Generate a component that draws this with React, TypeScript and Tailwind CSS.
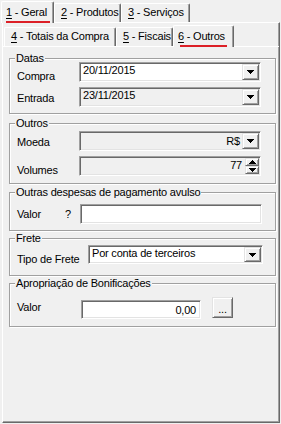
import React from "react";

const sunk =
  "border border-[#a0a0a0] border-r-white border-b-white shadow-[inset_1px_1px_0_#696969,inset_-1px_-1px_0_#e3e3e3]";
const raised =
  "border border-[#e3e3e3] border-r-[#696969] border-b-[#696969] shadow-[inset_1px_1px_0_#fff,inset_-1px_-1px_0_#a0a0a0] bg-[#f0f0f0]";

function Down() {
  return (
    <svg width="7" height="4" viewBox="0 0 7 4" shapeRendering="crispEdges">
      <path d="M0 0h7v1h-1v1h-1v1h-1v1h-1v-1h-1v-1h-1v-1h-1z" fill="#000" />
    </svg>
  );
}
function Up() {
  return (
    <svg width="7" height="4" viewBox="0 0 7 4" shapeRendering="crispEdges">
      <path d="M0 4h7v-1h-1v-1h-1v-1h-1v-1h-1v1h-1v1h-1v1h-1z" fill="#000" />
    </svg>
  );
}

function DropBtn() {
  return (
    <div className={`${raised} w-[17px] h-[16px] flex items-center justify-center shrink-0`}>
      <Down />
    </div>
  );
}

function Tab({
  n,
  rest,
  sel,
  w,
  ul,
}: {
  n: string;
  rest: string;
  sel?: boolean;
  w: string;
  ul?: string;
}) {
  return (
    <div
      className={`${w} relative flex flex-col border-l border-t border-white border-r border-r-[#696969] shadow-[inset_-1px_0_0_#a0a0a0] rounded-t-[2px] bg-[#f0f0f0] ${
        sel ? "h-[22px] -mb-px z-10 pt-[4px]" : "h-[19px] pt-[2px]"
      }`}
    >
      <div className={`whitespace-nowrap ${sel ? "pl-[4px]" : "pl-[6px]"}`}>
        <span className="underline underline-offset-[2px]">{n}</span>
        {rest}
      </div>
      {sel && <div className={`h-[2px] bg-[#dc1f26] mt-[2px] ${ul}`} />}
    </div>
  );
}

function Group({
  title,
  className,
  children,
}: {
  title: string;
  className?: string;
  children: React.ReactNode;
}) {
  return (
    <fieldset
      className={`ml-[6px] w-[267px] border border-[#a0a0a0] shadow-[inset_1px_1px_0_#fff,1px_1px_0_#fff] ${className ?? ""}`}
    >
      <legend className="ml-[5px] px-[1px] leading-[12px] bg-[#f0f0f0]">{title}</legend>
      {children}
    </fieldset>
  );
}

export default function App() {
  return (
    <div className="w-[281px] h-[424px] bg-[#f0f0f0] text-[11px] leading-[13px] text-black font-['Liberation_Sans',Arial,sans-serif] tracking-[-0.2px] overflow-hidden">
      {/* Outer tabs */}
      <div className="flex items-end h-[22px] pl-[1px]">
        <Tab n="1" rest=" - Geral" sel w="w-[53px]" ul="ml-[4px] w-[44px]" />
        <Tab n="2" rest=" - Produtos" w="w-[67px]" />
        <Tab n="3" rest=" - Serviços" w="w-[69px]" />
      </div>
      {/* Outer frame */}
      <div className="ml-[2px] w-[278px] h-[401px] border-l border-t border-white border-r border-b border-r-[#696969] border-b-[#696969] shadow-[inset_-1px_-1px_0_#a0a0a0] flex flex-col">
        {/* Inner tabs */}
        <div className="flex items-end h-[23px] pl-[1px]">
          <Tab n="4" rest=" - Totais da Compra" w="w-[112px]" />
          <Tab n="5" rest=" - Fiscais" w="w-[57px]" />
          <Tab n="6" rest=" - Outros" sel w="w-[61px]" ul="ml-[6px] w-[47px]" />
        </div>
        <div className="flex-1 border-t border-white pt-[5px]">
          <Group title="Datas" className="pb-[6px]">
            <div className="flex h-[20px] -mt-[2px]">
              <div className="w-[69px] pl-[7px] pt-[8px]">Compra</div>
              <div className={`${sunk} w-[182px] h-[20px] bg-white flex items-start`}>
                <div className="flex-1 pl-[3px] pt-[1px]">20/11/2015</div>
                <div className="pt-[1px] pr-[1px]">
                  <DropBtn />
                </div>
              </div>
            </div>
            <div className="flex h-[20px] mt-[5px]">
              <div className="w-[69px] pl-[7px] pt-[5px]">Entrada</div>
              <div className={`${sunk} w-[182px] h-[20px] bg-[#f0f0f0] flex items-start`}>
                <div className="flex-1 pl-[3px] pt-[1px]">23/11/2015</div>
                <div className="pt-[1px] pr-[1px]">
                  <DropBtn />
                </div>
              </div>
            </div>
          </Group>

          <Group title="Outros" className="mt-[3px] pb-[7px]">
            <div className="flex h-[20px] mt-[2px]">
              <div className="w-[69px] pl-[7px] pt-[5px]">Moeda</div>
              <div className={`${sunk} w-[182px] h-[20px] bg-[#f0f0f0] flex items-start`}>
                <div className="flex-1 text-right pr-[2px] pt-[3px]">R$</div>
                <div className="pt-[1px] pr-[1px]">
                  <DropBtn />
                </div>
              </div>
            </div>
            <div className="flex h-[20px] mt-[5px]">
              <div className="w-[69px] pl-[7px] pt-[8px]">Volumes</div>
              <div className={`${sunk} w-[182px] h-[20px] bg-[#f0f0f0] flex items-start`}>
                <div className="flex-1 text-right pr-[3px] pt-[2px]">77</div>
                <div className="pt-[1px] pr-[1px] flex flex-col">
                  <div className={`${raised} w-[14px] h-[8px] flex items-center justify-center`}>
                    <Up />
                  </div>
                  <div className={`${raised} w-[14px] h-[8px] flex items-center justify-center`}>
                    <Down />
                  </div>
                </div>
              </div>
            </div>
          </Group>

          <Group title="Outras despesas de pagamento avulso" className="mt-[2px] pb-[6px]">
            <div className="flex h-[20px] mt-[6px]">
              <div className="w-[55px] pl-[7px] pt-[4px]">Valor</div>
              <div className="w-[15px] pt-[4px]">?</div>
              <div className={`${sunk} w-[182px] h-[20px] bg-white`} />
            </div>
          </Group>

          <Group title="Frete" className="mt-[1px] pb-[10px]">
            <div className="flex h-[20px] mt-[1px]">
              <div className="w-[78px] pl-[7px] pt-[8px]">Tipo de Frete</div>
              <div className={`${sunk} w-[175px] h-[19px] bg-white flex items-start`}>
                <div className="flex-1 pl-[3px] pt-[1px]">Por conta de terceiros</div>
                <div className="pt-px pr-[1px]">
                  <div className={`${raised} w-[17px] h-[15px] flex items-center justify-center shrink-0`}>
                    <Down />
                  </div>
                </div>
              </div>
            </div>
          </Group>

          <Group title="Apropriação de Bonificações" className="mt-[1px] pb-[8px]">
            <div className="flex h-[21px] mt-[8px] items-start">
              <div className="w-[71px] pl-[7px] pt-[4px]">Valor</div>
              <div className={`${sunk} w-[120px] h-[19px] mt-[3px] bg-white text-right pr-[4px] pt-[3px]`}>
                0,00
              </div>
              <div className={`${raised} ml-[11px] w-[21px] h-[21px] flex items-end justify-center pb-[4px] leading-[8px]`}>
                ...
              </div>
            </div>
          </Group>
        </div>
      </div>
    </div>
  );
}
